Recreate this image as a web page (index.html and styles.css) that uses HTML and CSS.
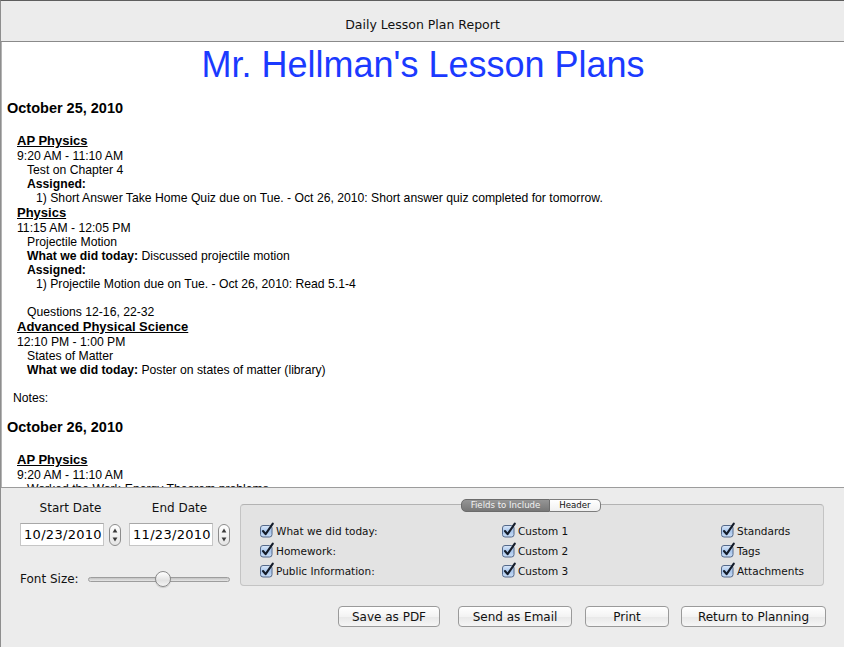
FILE: index.html
```html
<!DOCTYPE html>
<html lang="en">
<head>
    <meta charset="UTF-8">
    <title>Daily Lesson Plan Report</title>
    <link rel="stylesheet" href="styles.css">
</head>
<body>
    <svg class="defs" width="0" height="0" aria-hidden="true">
        <defs>
            <linearGradient id="chkFill" x1="0" y1="0" x2="0" y2="1">
                <stop offset="0" stop-color="#dbe8f8"/>
                <stop offset="0.5" stop-color="#a9c6ec"/>
                <stop offset="1" stop-color="#c9ddf6"/>
            </linearGradient>
            <linearGradient id="stepFill" x1="0" y1="0" x2="0" y2="1">
                <stop offset="0" stop-color="#ffffff"/>
                <stop offset="1" stop-color="#e4e4e4"/>
            </linearGradient>
            <symbol id="chk" viewBox="0 0 16 16">
                <rect x="1.5" y="3.5" width="11.5" height="11.5" rx="2.5" fill="url(#chkFill)" stroke="#55698a"/>
                <path d="M4 9 L6.6 12.2 L13.8 1.6" fill="none" stroke="#141c2a" stroke-width="2.1" stroke-linecap="round" stroke-linejoin="round"/>
            </symbol>
            <symbol id="stepper" viewBox="0 0 12 22">
                <rect x="0.5" y="0.5" width="11" height="21" rx="5.5" fill="url(#stepFill)" stroke="#8c8c8c"/>
                <path d="M6 4.5 L8.4 8.5 H3.6 Z" fill="#3a3a3a"/>
                <path d="M6 17.5 L8.4 13.5 H3.6 Z" fill="#3a3a3a"/>
            </symbol>
        </defs>
    </svg>

    <div class="window">
        <div class="titlebar">Daily Lesson Plan Report</div>

        <div class="report">
            <h1 class="report-title">Mr. Hellman's Lesson Plans</h1>

            <h2 class="day">October 25, 2010</h2>
            <div class="lesson">
                <h3 class="course">AP Physics</h3>
                <div class="time">9:20 AM - 11:10 AM</div>
                <div class="detail">Test on Chapter 4</div>
                <div class="detail"><b>Assigned:</b></div>
                <div class="item">1) Short Answer Take Home Quiz due on Tue. - Oct 26, 2010: Short answer quiz completed for tomorrow.</div>
            </div>
            <div class="lesson">
                <h3 class="course">Physics</h3>
                <div class="time">11:15 AM - 12:05 PM</div>
                <div class="detail">Projectile Motion</div>
                <div class="detail"><b>What we did today:</b> Discussed projectile motion</div>
                <div class="detail"><b>Assigned:</b></div>
                <div class="item">1) Projectile Motion due on Tue. - Oct 26, 2010: Read 5.1-4</div>
                <div class="detail gap">Questions 12-16, 22-32</div>
            </div>
            <div class="lesson">
                <h3 class="course">Advanced Physical Science</h3>
                <div class="time">12:10 PM - 1:00 PM</div>
                <div class="detail">States of Matter</div>
                <div class="detail"><b>What we did today:</b> Poster on states of matter (library)</div>
            </div>
            <div class="notes">Notes:</div>

            <h2 class="day">October 26, 2010</h2>
            <div class="lesson">
                <h3 class="course">AP Physics</h3>
                <div class="time">9:20 AM - 11:10 AM</div>
                <div class="detail">Worked the Work-Energy Theorem problems</div>
            </div>
        </div>

        <div class="panel">
            <div class="controls">
                <div class="range">
                    <div class="dates">
                        <div class="date-field">
                            <div class="date-label">Start Date</div>
                            <div class="date-input">
                                <span class="field">10/23/2010</span>
                                <svg class="stepper" width="12" height="22"><use href="#stepper"/></svg>
                            </div>
                        </div>
                        <div class="date-field">
                            <div class="date-label">End Date</div>
                            <div class="date-input">
                                <span class="field">11/23/2010</span>
                                <svg class="stepper" width="12" height="22"><use href="#stepper"/></svg>
                            </div>
                        </div>
                    </div>
                    <div class="font-size">
                        <span>Font Size:</span>
                        <div class="slider">
                            <div class="track"></div>
                            <div class="knob" style="left: 67px"></div>
                        </div>
                    </div>
                </div>

                <div class="fields">
                    <div class="tabs">
                        <span class="tab active">Fields to Include</span>
                        <span class="tab">Header</span>
                    </div>
                    <div class="field-grid">
                        <label class="check"><svg width="16" height="16"><use href="#chk"/></svg>What we did today:</label>
                        <label class="check"><svg width="16" height="16"><use href="#chk"/></svg>Custom 1</label>
                        <label class="check"><svg width="16" height="16"><use href="#chk"/></svg>Standards</label>
                        <label class="check"><svg width="16" height="16"><use href="#chk"/></svg>Homework:</label>
                        <label class="check"><svg width="16" height="16"><use href="#chk"/></svg>Custom 2</label>
                        <label class="check"><svg width="16" height="16"><use href="#chk"/></svg>Tags</label>
                        <label class="check"><svg width="16" height="16"><use href="#chk"/></svg>Public Information:</label>
                        <label class="check"><svg width="16" height="16"><use href="#chk"/></svg>Custom 3</label>
                        <label class="check"><svg width="16" height="16"><use href="#chk"/></svg>Attachments</label>
                    </div>
                </div>
            </div>

            <div class="actions">
                <button class="btn btn-pdf">Save as PDF</button>
                <button class="btn btn-email">Send as Email</button>
                <button class="btn btn-print">Print</button>
                <button class="btn btn-return">Return to Planning</button>
            </div>
        </div>
    </div>
</body>
</html>
```

FILE: styles.css
```css
body {
    margin: 0;
    width: 844px;
    height: 647px;
    overflow: hidden;
    background-color: #ececec;
    font-family: "DejaVu Sans", sans-serif;
}
.defs {
    position: absolute;
    width: 0;
    height: 0;
}
.window {
    height: 646px;
    border-top: 1px solid #5e5e5e;
    border-left: 1px solid #8e8e8e;
    display: flex;
    flex-direction: column;
}
.titlebar {
    height: 32px;
    padding-top: 8px;
    line-height: 32px;
    text-align: center;
    font-size: 12.5px;
    color: #111;
    background-color: #ececec;
    border-bottom: 1px solid #8a8a8a;
}

/* report preview */
.report {
    box-sizing: border-box;
    height: 445px;
    flex-shrink: 0;
    overflow: hidden;
    background: white;
    border-left: 1px solid #b4b4b4;
    padding: 2px 5px 0;
    font-family: "Liberation Sans", Arial, sans-serif;
    font-size: 12.2px;
    line-height: 14px;
    color: #000;
}
.report-title {
    margin: 0;
    font-size: 36px;
    line-height: 42px;
    font-weight: normal;
    text-align: center;
    color: #1b3aff;
}
.day {
    margin: 13px 0 16px;
    font-size: 14.5px;
    line-height: 18px;
    font-weight: bold;
}
.course {
    margin: 0 0 0 10px;
    font-size: 13px;
    line-height: 16px;
    font-weight: bold;
    text-decoration: underline;
}
.time {
    margin-left: 10px;
}
.detail {
    margin-left: 20px;
}
.detail.gap {
    margin-top: 14px;
}
.item {
    margin-left: 29px;
}
.notes {
    margin: 14px 0 0 6px;
}

/* bottom panel */
.panel {
    flex: 1;
    border-top: 1px solid #9c9c9c;
    background-color: #ececec;
    padding: 12px 19px 0;
    font-size: 12px;
    color: #111;
}
.controls {
    display: flex;
    gap: 8px;
}
.range {
    width: 212px;
}
.dates {
    display: flex;
    gap: 8px;
}
.date-label {
    line-height: 16px;
    text-align: center;
    margin-bottom: 7px;
}
.date-input {
    display: flex;
    align-items: center;
    gap: 5px;
}
.field {
    box-sizing: border-box;
    width: 84px;
    height: 23px;
    line-height: 21px;
    padding-left: 3px;
    background: white;
    border: 1px solid #c6c6c6;
    border-top-color: #a8a8a8;
    font-size: 13px;
    letter-spacing: 0.3px;
    color: #000;
}
.stepper {
    display: block;
}
.font-size {
    margin-top: 24px;
    height: 18px;
    display: flex;
    align-items: center;
    gap: 9px;
}
.slider {
    position: relative;
    width: 142px;
    height: 18px;
    display: flex;
    align-items: center;
}
.track {
    width: 100%;
    height: 5px;
    box-sizing: border-box;
    border: 1px solid #9d9d9d;
    border-radius: 3px;
    background: linear-gradient(#c4c4c4, #e6e6e6);
}
.knob {
    position: absolute;
    top: 1px;
    width: 16px;
    height: 16px;
    box-sizing: border-box;
    border: 1px solid #8a8a8a;
    border-radius: 50%;
    background: linear-gradient(#ffffff, #e2e2e2 60%, #f4f4f4);
    box-shadow: 0 1px 1px rgba(0,0,0,0.15);
}

.fields {
    position: relative;
    margin-top: 4px;
    width: 584px;
    height: 82px;
    box-sizing: border-box;
    border: 1px solid #c4c4c4;
    border-top-color: #b3b3b3;
    border-radius: 4px;
    background-color: #e3e3e3;
    padding: 16px 0 0 18px;
}
.tabs {
    position: absolute;
    top: -6px;
    left: 220px;
    display: flex;
    font-size: 8.6px;
    line-height: 11px;
}
.tab {
    border: 1px solid #7d7d7d;
    background: linear-gradient(#ffffff, #f0f0f0);
    color: #111;
    text-align: center;
}
.tab.active {
    width: 87px;
    border-radius: 5px 0 0 5px;
    background: linear-gradient(#959595, #777777);
    color: #f2f2f2;
    border-color: #6c6c6c;
}
.tab:last-child {
    width: 50px;
    border-left: none;
    border-radius: 0 5px 5px 0;
}
.field-grid {
    display: grid;
    grid-template-columns: 242px 219px auto;
    grid-auto-rows: 20px;
}
.check {
    display: flex;
    align-items: center;
    gap: 1px;
    font-size: 10.5px;
    color: #111;
}
.check svg {
    display: block;
    margin-top: -3px;
}

.actions {
    display: flex;
    justify-content: flex-end;
    margin-top: 18px;
    margin-right: -1px;
}
.btn {
    box-sizing: border-box;
    height: 21px;
    padding: 0;
    border: 1px solid #9a9a9a;
    border-radius: 4px;
    background: linear-gradient(#ffffff, #f3f3f3 50%, #e8e8e8 51%, #f6f6f6);
    font-family: "DejaVu Sans", sans-serif;
    font-size: 12px;
    color: #111;
}
.btn-pdf {
    width: 102px;
}
.btn-email {
    width: 114px;
    margin-left: 18px;
}
.btn-print {
    width: 84px;
    margin-left: 13px;
}
.btn-return {
    width: 145px;
    margin-left: 12px;
}
```
